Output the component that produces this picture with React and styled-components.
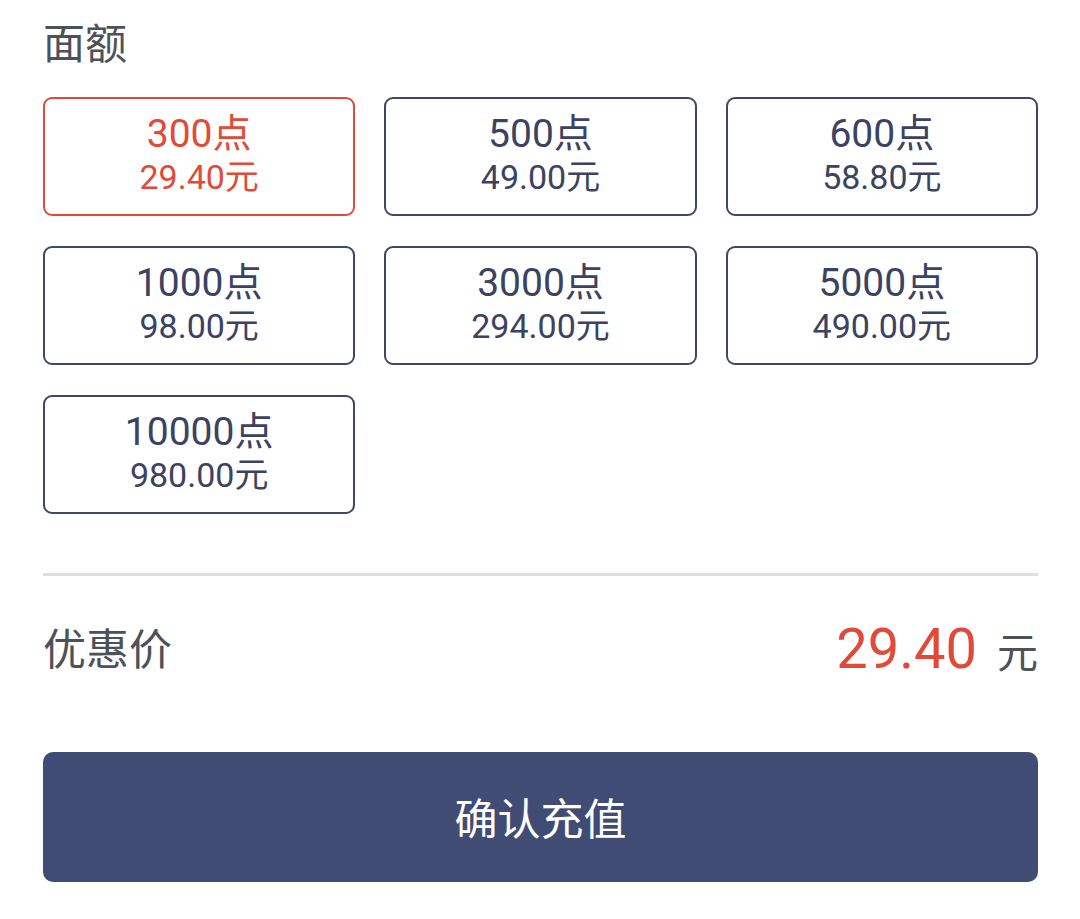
import React, { useState } from 'react'
import styled, { createGlobalStyle } from 'styled-components'

const GlobalStyle = createGlobalStyle`
  body {
    margin: 0;
    background: #fff;
    font-family: Roboto, 'Noto Sans CJK SC', sans-serif;
  }
`

const Page = styled.div`
  padding: 24px 42px 0 43px;
  display: flex;
  flex-direction: column;
`

const Title = styled.div`
  font-size: 42px;
  line-height: 42px;
  color: #4d5258;
`

const Grid = styled.div`
  margin-top: 31px;
  display: grid;
  grid-template-columns: repeat(3, 1fr);
  column-gap: 29px;
  row-gap: 30px;
`

const Card = styled.button`
  box-sizing: border-box;
  height: 119px;
  padding: 13px 0 0;
  border: 2px solid ${({ active }) => active ? '#e14a38' : '#3f4668'};
  border-radius: 9px;
  background: #fff;
  color: ${({ active }) => active ? '#e14a38' : '#3b4262'};
  font-family: inherit;
  display: flex;
  flex-direction: column;
  align-items: center;
  cursor: pointer;
`

const Points = styled.span`
  font-size: 39px;
  line-height: 44px;
`

const Price = styled.span`
  font-size: 34px;
  line-height: 43px;
`

const Divider = styled.div`
  margin-top: 59px;
  height: 3px;
  background: #dedede;
`

const Row = styled.div`
  margin-top: 30px;
  height: 80px;
  display: flex;
  align-items: center;
  justify-content: space-between;
`

const Label = styled.span`
  font-size: 43px;
  color: #4d5258;
`

const Amount = styled.div`
  display: flex;
  align-items: baseline;
  padding-top: 6px;
`

const Total = styled.span`
  font-size: 56px;
  color: #e14a38;
`

const Unit = styled.span`
  margin-left: 20px;
  font-size: 41px;
  color: #4d5258;
`

const Submit = styled.button`
  margin-top: 66px;
  height: 130px;
  padding-bottom: 4px;
  border: none;
  border-radius: 10px;
  background: #414c74;
  color: #fff;
  font-family: inherit;
  font-size: 43px;
  cursor: pointer;
`

const options = [
  { points: 300, price: '29.40' },
  { points: 500, price: '49.00' },
  { points: 600, price: '58.80' },
  { points: 1000, price: '98.00' },
  { points: 3000, price: '294.00' },
  { points: 5000, price: '490.00' },
  { points: 10000, price: '980.00' },
]

export default function App() {
  const [selected, setSelected] = useState(0)

  return (
    <>
      <GlobalStyle />
      <Page>
        <Title>面额</Title>
        <Grid>
          {options.map((o, i) => (
            <Card key={o.points} active={selected === i ? 1 : 0} onClick={() => setSelected(i)}>
              <Points>{o.points}点</Points>
              <Price>{o.price}元</Price>
            </Card>
          ))}
        </Grid>
        <Divider />
        <Row>
          <Label>优惠价</Label>
          <Amount>
            <Total>{options[selected].price}</Total>
            <Unit>元</Unit>
          </Amount>
        </Row>
        <Submit>确认充值</Submit>
      </Page>
    </>
  )
}
